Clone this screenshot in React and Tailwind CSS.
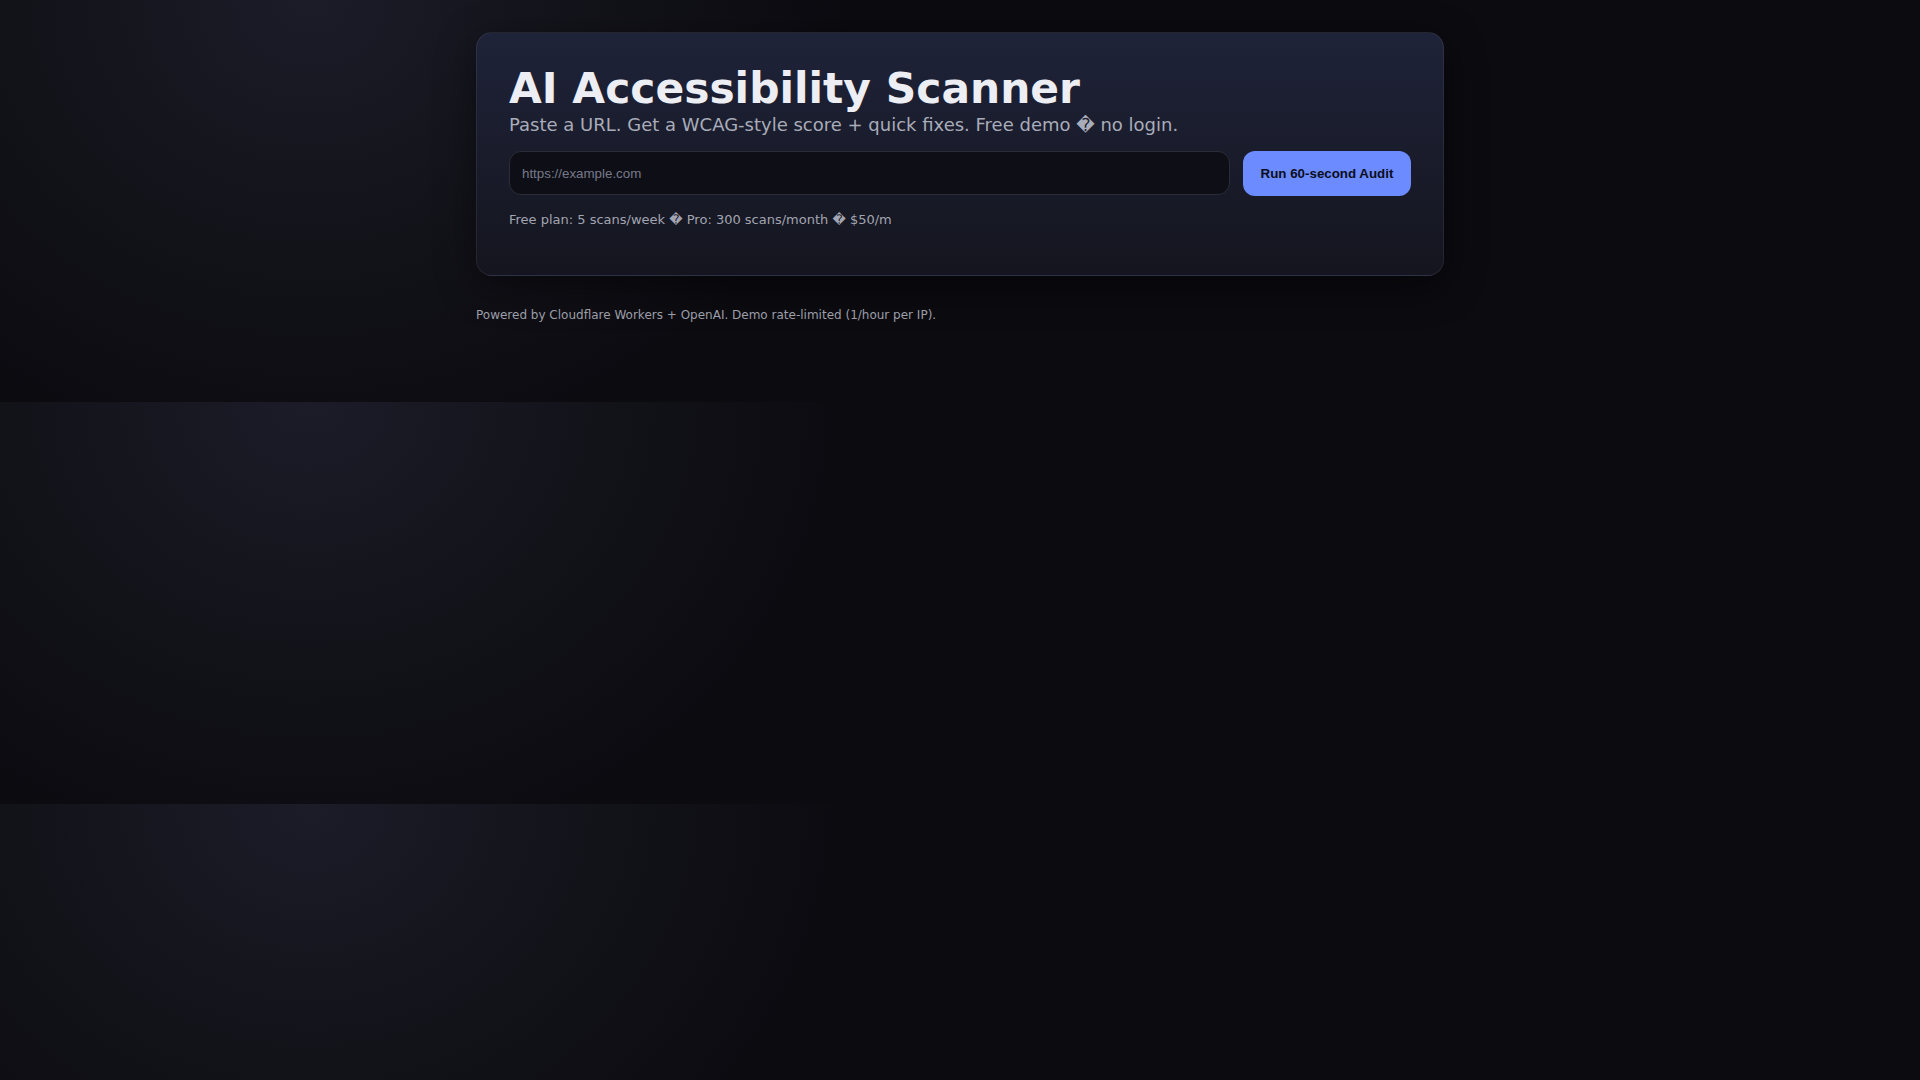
export default function App() {
  return (
    <div className="min-h-screen bg-[#0b0b10] bg-[radial-gradient(ellipse_540px_470px_at_310px_0px,#1b1c28_0%,#121219_55%,#0b0b10_100%)] bg-[length:100%_402px] bg-repeat font-['DejaVu_Sans',sans-serif]">
      <main className="mx-auto w-[968px] pt-[32px]">
        <section className="rounded-[16px] border border-[#ffffff12] bg-[linear-gradient(180deg,#1f2339_0%,#14151e_100%)] p-[32px] pb-[45px] shadow-[0_10px_40px_rgba(0,0,0,0.45)]">
          <h1 className="m-0 mt-[1px] text-[42.4px] font-bold leading-[1.1] text-[#eceef4]">
            AI Accessibility Scanner
          </h1>
          <p className="m-0 text-[18px] leading-[1.3] text-[#a9acb9]">
            Paste a URL. Get a WCAG-style score + quick fixes. Free demo {"\uFFFD"} no login.
          </p>
          <div className="mt-[15px] flex gap-[13px]">
            <input
              type="text"
              placeholder="https://example.com"
              className="h-[44px] flex-1 rounded-[12px] border border-[#2a2c38] bg-[#0e0f16] px-[12px] font-['Liberation_Sans',Arial,sans-serif] text-[13.333px] text-[#e5e7eb] outline-none placeholder:text-[#77798a]"
            />
            <button className="h-[45px] w-[168px] rounded-[12px] bg-[#6c8bff] font-['Liberation_Sans',Arial,sans-serif] text-[13.333px] font-bold text-[#0b0d1a]">
              Run 60-second Audit
            </button>
          </div>
          <p className="m-0 mt-[14px] text-[13px] leading-[1.5] text-[#a2a5b1]">
            Free plan: 5 scans/week {"\uFFFD"} Pro: 300 scans/month {"\uFFFD"} $50/m
          </p>
        </section>
        <p className="m-0 mt-[30px] text-[12px] leading-[1.5] text-[#9c9ea8]">
          Powered by Cloudflare Workers + OpenAI. Demo rate-limited (1/hour per IP).
        </p>
      </main>
    </div>
  );
}
